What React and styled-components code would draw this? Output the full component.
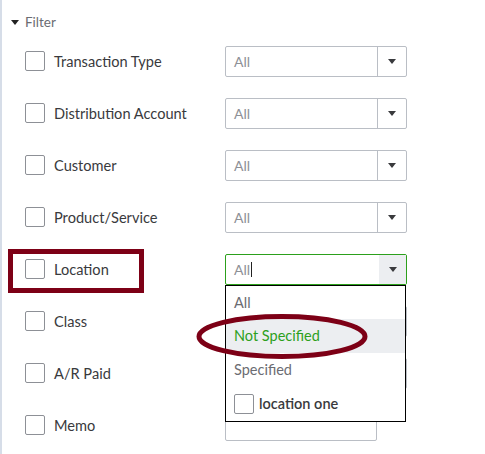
import React from "react";
import styled, { createGlobalStyle } from "styled-components";

const Global = createGlobalStyle`
  html, body { margin: 0; padding: 0; background: #fff; }
  body { font-family: Lato, "Open Sans", sans-serif; }
`;

const Page = styled.div`
  position: relative;
  width: 485px;
  height: 454px;
  border-left: 2px solid #d6dde8;
  box-sizing: border-box;
  overflow: hidden;
`;

const Header = styled.div`
  display: flex;
  align-items: center;
  gap: 6px;
  height: 35px;
  padding: 9px 0 0 9px;
  box-sizing: border-box;
  font-size: 13.5px;
  color: #6b6c72;
`;

const Caret = styled.span`
  width: 0;
  height: 0;
  border-left: 4.5px solid transparent;
  border-right: 4.5px solid transparent;
  border-top: 5px solid #222;
`;

const List = styled.div`
  display: flex;
  flex-direction: column;
`;

const Row = styled.div`
  display: grid;
  grid-template-columns: 200px auto;
  align-items: center;
  height: 52px;
  padding-left: 23px;
`;

const LabelCell = styled.label`
  display: flex;
  align-items: center;
  gap: 9px;
  font-size: 14.6px;
  color: #393a3d;
`;

const Box = styled.span`
  width: 20px;
  height: 20px;
  box-sizing: border-box;
  border: 1px solid #8d9096;
  border-radius: 2px;
  background: #fff;
  flex: none;
`;

const SelectWrap = styled.div`
  position: relative;
  width: 182px;
`;

const Select = styled.div`
  display: flex;
  height: 31px;
  box-sizing: border-box;
  border: 1px solid ${(p) => (p.$active ? "#2ca01c" : "#babec5")};
  border-radius: 2px;
  background: #fff;
`;

const Value = styled.div`
  flex: 1;
  display: flex;
  align-items: center;
  padding-left: 8px;
  font-size: 14px;
  color: #8d9096;
`;

const Cursor = styled.span`
  display: inline-block;
  width: 1px;
  height: 15px;
  background: #222;
  margin-left: 1px;
`;

const Arrow = styled.div`
  width: ${(p) => (p.$active ? "27px" : "28px")};
  display: flex;
  align-items: center;
  justify-content: center;
  border-left: ${(p) => (p.$active ? "none" : "1px solid #babec5")};
  background: ${(p) => (p.$active ? "#eceef1" : "transparent")};
  &::after {
    content: "";
    border-left: 4.5px solid transparent;
    border-right: 4.5px solid transparent;
    border-top: 5px solid #393a3d;
  }
`;

const TextInput = styled.div`
  width: 152px;
  height: 31px;
  box-sizing: border-box;
  border: 1px solid #babec5;
  border-radius: 2px;
`;

const Menu = styled.div`
  position: absolute;
  top: 31px;
  left: 0;
  width: 181px;
  box-sizing: border-box;
  border: 1px solid #000;
  background: #fff;
  z-index: 5;
`;

const Item = styled.div`
  display: flex;
  align-items: center;
  gap: 5px;
  height: ${(p) => (p.$first ? "33px" : "34px")};
  padding-left: 8px;
  font-size: 14.5px;
  color: ${(p) => (p.$hl ? "#2ca01c" : p.$strong ? "#393a3d" : "#6b6c72")};
  font-weight: ${(p) => (p.$strong ? 600 : 400)};
  background: ${(p) => (p.$hl ? "#eceef1" : "transparent")};
`;

const RectMark = styled.div`
  position: absolute;
  left: 6px;
  top: 249px;
  width: 136px;
  height: 44px;
  box-sizing: border-box;
  border: 5px solid #7d0016;
  z-index: 10;
`;

const EllipseMark = styled.svg`
  position: absolute;
  left: 193px;
  top: 313px;
  z-index: 10;
`;

const rows = [
  { label: "Transaction Type" },
  { label: "Distribution Account" },
  { label: "Customer" },
  { label: "Product/Service" },
  { label: "Location", active: true },
  { label: "Class" },
  { label: "A/R Paid" },
  { label: "Memo", text: true },
];

export default function App() {
  return (
    <>
      <Global />
      <Page>
        <Header>
          <Caret />
          Filter
        </Header>
        <List>
          {rows.map((r) => (
            <Row key={r.label}>
              <LabelCell>
                <Box />
                {r.label}
              </LabelCell>
              {r.text ? (
                <TextInput />
              ) : (
                <SelectWrap>
                  <Select $active={r.active}>
                    <Value>
                      All
                      {r.active && <Cursor />}
                    </Value>
                    <Arrow $active={r.active} />
                  </Select>
                  {r.active && (
                    <Menu>
                      <Item $first>All</Item>
                      <Item $hl>Not Specified</Item>
                      <Item>Specified</Item>
                      <Item $strong>
                        <Box />
                        location one
                      </Item>
                    </Menu>
                  )}
                </SelectWrap>
              )}
            </Row>
          ))}
        </List>
        <RectMark />
        <EllipseMark width="176" height="48" viewBox="0 0 176 48">
          <ellipse cx="87" cy="23.5" rx="83" ry="20" fill="none" stroke="#7d0016" strokeWidth="5" />
        </EllipseMark>
      </Page>
    </>
  );
}
